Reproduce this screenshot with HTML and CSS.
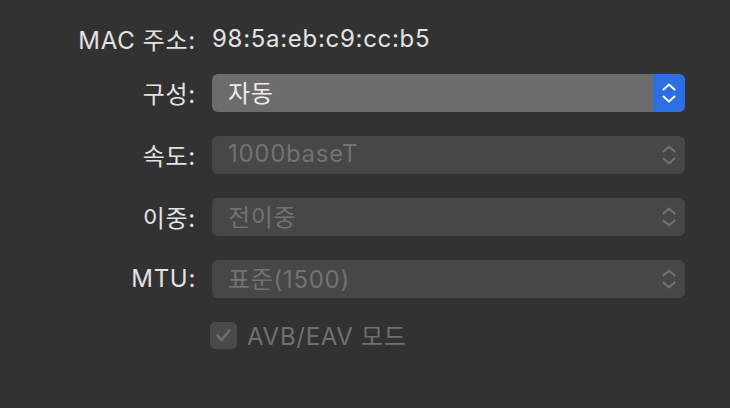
FILE: index.html
```html
<!DOCTYPE html>
<html>

<head>
    <meta charset="UTF-8">
    <title>네트워크 하드웨어</title>
    <link rel="stylesheet" href="styles.css">
</head>

<body>
    <div class="panel">
        <div class="row info">
            <div class="label">MAC 주소:</div>
            <div class="value">98:5a:eb:c9:cc:b5</div>
        </div>
        <div class="row">
            <div class="label">구성:</div>
            <div class="popup active">
                <span class="text">자동</span>
                <span class="stepper">
                    <svg width="14" height="24" viewBox="0 0 14 24"><path d="M1.5 8.5 L7 3.5 L12.5 8.5 M1.5 15.5 L7 20.5 L12.5 15.5" fill="none" stroke="currentColor" stroke-width="2" stroke-linecap="round" stroke-linejoin="round"/></svg>
                </span>
            </div>
        </div>
        <div class="row">
            <div class="label">속도:</div>
            <div class="popup">
                <span class="text">1000baseT</span>
                <span class="stepper">
                    <svg width="14" height="24" viewBox="0 0 14 24"><path d="M1.5 8.5 L7 3.5 L12.5 8.5 M1.5 15.5 L7 20.5 L12.5 15.5" fill="none" stroke="currentColor" stroke-width="2" stroke-linecap="round" stroke-linejoin="round"/></svg>
                </span>
            </div>
        </div>
        <div class="row">
            <div class="label">이중:</div>
            <div class="popup">
                <span class="text">전이중</span>
                <span class="stepper">
                    <svg width="14" height="24" viewBox="0 0 14 24"><path d="M1.5 8.5 L7 3.5 L12.5 8.5 M1.5 15.5 L7 20.5 L12.5 15.5" fill="none" stroke="currentColor" stroke-width="2" stroke-linecap="round" stroke-linejoin="round"/></svg>
                </span>
            </div>
        </div>
        <div class="row last">
            <div class="label">MTU:</div>
            <div class="popup">
                <span class="text">표준(1500)</span>
                <span class="stepper">
                    <svg width="14" height="24" viewBox="0 0 14 24"><path d="M1.5 8.5 L7 3.5 L12.5 8.5 M1.5 15.5 L7 20.5 L12.5 15.5" fill="none" stroke="currentColor" stroke-width="2" stroke-linecap="round" stroke-linejoin="round"/></svg>
                </span>
            </div>
        </div>
        <div class="row check">
            <div class="label"></div>
            <div class="checkbox">
                <span class="box">
                    <svg width="27" height="27" viewBox="0 0 27 27"><path d="M7.5 13.5 L11.5 18 L19.5 8.5" fill="none" stroke="currentColor" stroke-width="2.6" stroke-linecap="round" stroke-linejoin="round"/></svg>
                </span>
                <span class="check-text">AVB/EAV 모드</span>
            </div>
        </div>
    </div>
</body>

</html>
```

FILE: styles.css
```css
body {
    margin: 0;
    background-color: #323232;
    font-family: Inter, "Noto Sans CJK KR", sans-serif;
    font-size: 24px;
    letter-spacing: 0.7px;
    color: #e2e2e2;
}

.panel {
    display: flex;
    flex-direction: column;
    padding: 20px 0 0 8px;
}

.row {
    display: flex;
    align-items: center;
    height: 38px;
    margin-bottom: 24px;
}

.row.info {
    margin-bottom: 16px;
}

.row.last {
    margin-bottom: 23px;
}

.row.check {
    height: 28px;
    margin-bottom: 0;
}

.label {
    width: 188px;
    margin-right: 16px;
    padding-bottom: 2px;
    text-align: right;
    color: #e2e2e2;
}

.value {
    padding-bottom: 2px;
    color: #e2e2e2;
}

.popup {
    display: flex;
    align-items: center;
    justify-content: space-between;
    width: 473px;
    height: 38px;
    box-sizing: border-box;
    border-radius: 6px;
    background-color: #474747;
    color: #727272;
    overflow: hidden;
}

.popup .text {
    padding-left: 16px;
    padding-bottom: 3px;
}

.popup .stepper {
    display: flex;
    align-items: center;
    justify-content: center;
    width: 32px;
    height: 100%;
}

.popup.active {
    background-color: #6c6c6c;
    color: #ececec;
}

.popup.active .stepper {
    background-color: #2c6fe3;
    color: #ffffff;
}

.checkbox {
    display: flex;
    align-items: center;
    margin-left: -2px;
}

.checkbox .box {
    display: flex;
    width: 27px;
    height: 27px;
    border-radius: 5px;
    background-color: #4a4a4a;
    color: #6e6e6e;
}

.check-text {
    margin-left: 10px;
    padding-bottom: 2px;
    color: #707070;
}
```
